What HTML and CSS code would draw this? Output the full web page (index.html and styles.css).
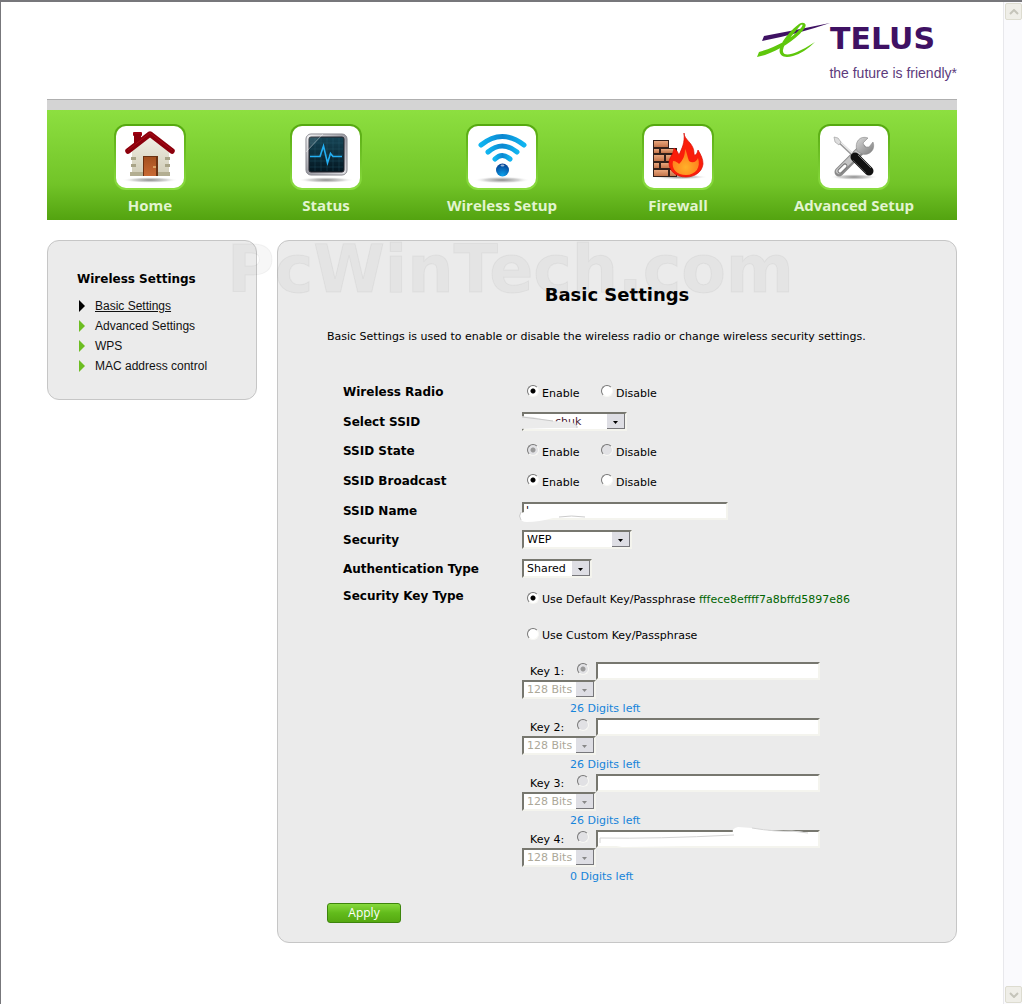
FILE: index.html
```html
<!DOCTYPE html>
<html lang="en">
<head>
  <meta charset="UTF-8" />
  <meta name="viewport" content="width=device-width, initial-scale=1.0"/>
  <title>TELUS - Basic Settings</title>
  <link rel="stylesheet" href="styles.css">
</head>
<body>

  <div class="page">
    <!-- Logo -->
    <header>
      <div class="logo">
        <svg class="swash" width="76" height="38" viewBox="0 0 76 38" aria-hidden="true">
          <path d="M6 19 L8 14 Q40 8 74 1 Q42 12 6 19Z" fill="#3f1163"/>
          <path d="M1 35 L3 30 C20 25 34 18 45 6 C48 2 46 1 43 5 C37 13 28 21 27 28 C26 34 34 33 41 30 Q50 26 59 20 Q48 31 37 34 C27 37 22 33 24 26 C26 18 36 7 43 2 C48 -1 52 2 48 7 C38 20 22 28 9 33Z" fill="#5fc70c"/>
        </svg>
        <span class="brand">TELUS</span>
      </div>
      <div class="tagline">the future is friendly*</div>
    </header>

    <!-- Main navigation -->
    <nav>
      <a href="#">
        <span class="icon">
          <svg viewBox="0 0 68 62" aria-hidden="true">
            <defs>
              <radialGradient id="shadow"><stop offset="0" stop-color="#888"/><stop offset=".6" stop-color="#ccc" stop-opacity=".8"/><stop offset="1" stop-color="#fff" stop-opacity="0"/></radialGradient>
              <linearGradient id="wall" x1="0" y1="0" x2="0" y2="1"><stop offset="0" stop-color="#f3f1e6"/><stop offset="1" stop-color="#cfcbb6"/></linearGradient>
              <linearGradient id="door" x1="0" y1="0" x2="0" y2="1"><stop offset="0" stop-color="#a4501f"/><stop offset="1" stop-color="#c96a35"/></linearGradient>
            </defs>
            <ellipse cx="34" cy="54" rx="28" ry="3" fill="url(#shadow)"/>
            <rect x="17" y="6" width="9" height="4" rx="1" fill="#a00010"/>
            <rect x="18" y="8" width="7" height="12" fill="#8c000c"/>
            <path d="M16 25 L34 9 L53 25 V50 H16Z" fill="url(#wall)"/>
            <path d="M15 31h5v3h-5z M15 38h5v3h-5z M49 31h5v3h-5z M49 38h5v3h-5z" fill="#a9a488"/>
            <path d="M14 46h13v4H14z M41 46h13v4H41z" fill="#b3ae92"/>
            <rect x="27" y="30" width="15" height="20" fill="#6b3212"/>
            <rect x="28" y="31" width="12" height="19" fill="url(#door)"/>
            <path d="M37 41h3" stroke="#ffe29a"/>
            <path d="M12 25 L34 8 L56 25" fill="none" stroke="#8c000c" stroke-width="5.500" stroke-linecap="round" stroke-linejoin="round"/>
            <path d="M12 24 L34 7 L56 24" fill="none" stroke="#a80d18" stroke-width="1"/>
          </svg>
        </span>
        Home
      </a>
      <a href="#">
        <span class="icon">
          <svg viewBox="0 0 68 62" aria-hidden="true">
            <defs>
              <linearGradient id="frame" x1="0" y1="0" x2="1" y2="1"><stop offset="0" stop-color="#f4f4f6"/><stop offset=".5" stop-color="#9b9ba3"/><stop offset="1" stop-color="#e6e6ea"/></linearGradient>
              <linearGradient id="screen" x1="0" y1="0" x2="0" y2="1"><stop offset="0" stop-color="#164455"/><stop offset="1" stop-color="#031620"/></linearGradient>
            </defs>
            <ellipse cx="34" cy="54" rx="28" ry="3" fill="url(#shadow)"/>
            <rect x="14" y="8" width="41" height="41" rx="5" fill="url(#frame)" stroke="#85858c"/>
            <rect x="17" y="11" width="35" height="35" rx="2" fill="url(#screen)" stroke="#24242c"/>
            <path d="M23 12v33M29 12v33M35 12v33M41 12v33M47 12v33M18 17h33M18 23h33M18 29h33M18 35h33M18 41h33" stroke="#2c6478" stroke-width=".5" opacity=".6"/>
            <path d="M14 26 L31 8 H17 Q14 8 14 12Z" fill="#fff" opacity=".12"/>
            <path d="M14 26 L31 8" stroke="#fff" stroke-width=".8" opacity=".5"/>
            <path d="M18 30.500 H28 L31.500 20 L35.500 37 L38.500 27.500 L41 30.500 H50" fill="none" stroke="#23aef2" stroke-width="1.600"/>
          </svg>
        </span>
        Status
      </a>
      <a href="#">
        <span class="icon">
          <svg viewBox="0 0 68 62" aria-hidden="true">
            <defs>
              <linearGradient id="wave" x1="0" y1="0" x2="1" y2="0"><stop offset="0" stop-color="#10b4f0"/><stop offset=".5" stop-color="#0a86d0"/><stop offset="1" stop-color="#10b4f0"/></linearGradient>
              <radialGradient id="ball" cx=".5" cy=".9" r=".9"><stop offset="0" stop-color="#0aa0ea"/><stop offset="1" stop-color="#033c90"/></radialGradient>
            </defs>
            <ellipse cx="34" cy="54" rx="28" ry="3.500" fill="url(#shadow)"/>
            <g fill="none" stroke="url(#wave)" stroke-width="5" stroke-linecap="round">
              <path d="M13 19 Q34 2 56 19"/>
              <path d="M20 26 Q34 14 49 26"/>
              <path d="M27 33 Q34 26 42 33"/>
            </g>
            <circle cx="34.500" cy="44" r="6.500" fill="url(#ball)"/>
            <ellipse cx="34.500" cy="39.500" rx="2" ry="1" fill="#fff" opacity=".6"/>
          </svg>
        </span>
        Wireless Setup
      </a>
      <a href="#">
        <span class="icon">
          <svg viewBox="0 0 68 62" aria-hidden="true">
            <defs>
              <linearGradient id="brick" x1="0" y1="0" x2="0" y2="1"><stop offset="0" stop-color="#e9a67c"/><stop offset="1" stop-color="#c4744a"/></linearGradient>
              <radialGradient id="flame" cx=".5" cy=".7" r=".6"><stop offset="0" stop-color="#ffb129"/><stop offset="1" stop-color="#ff7a1c"/></radialGradient>
            </defs>
            <ellipse cx="36" cy="51" rx="28" ry="2.500" fill="url(#shadow)"/>
            <path d="M9 14h16v8h8v29H9z" fill="#33201a"/>
            <g fill="url(#brick)">
              <rect x="10" y="15" width="14" height="6"/>
              <rect x="10" y="23" width="5" height="4"/><rect x="17" y="23" width="14" height="4"/>
              <rect x="10" y="29" width="10" height="6"/><rect x="22" y="29" width="10" height="6"/>
              <rect x="10" y="37" width="5" height="5"/><rect x="17" y="37" width="14" height="5"/>
              <rect x="10" y="44" width="14" height="6"/><rect x="26" y="44" width="6" height="6"/>
            </g>
            <path d="M40 7 C40 14 50 17 50 27 C50 31 53 29 54 24 C57 29 59 33 59 38 C58 46 51 51 42 51 C32 51 25 45 25 37 C25 31 29 30 30 22 C33 24 34 27 35 29 C38 22 41 17 40 7Z" fill="#fa1e0a" stroke="#d90f06" stroke-width=".7"/>
            <path d="M41 23 C43 26 43 30 45 35 C49 38 53 35 54 32 C57 41 52 49 42 49 C33 49 27 43 29 35 C32 35 34 37 35 38 C39 34 41 30 41 23Z" fill="url(#flame)"/>
          </svg>
        </span>
        Firewall
      </a>
      <a href="#">
        <span class="icon">
          <svg viewBox="0 0 68 62" aria-hidden="true">
            <defs>
              <linearGradient id="steel" x1="0" y1="0" x2="1" y2="1"><stop offset="0" stop-color="#dcdcdc"/><stop offset="1" stop-color="#7c7c7c"/></linearGradient>
            </defs>
            <ellipse cx="34" cy="51" rx="24" ry="3" fill="url(#shadow)"/>
            <path d="M19 46 L42 23" stroke="#8a8a8a" stroke-width="9" stroke-linecap="round"/>
            <path d="M19 45 L42 22" stroke="#c4c4c4" stroke-width="6" stroke-linecap="round"/>
            <path d="M20 45 L25 40" stroke="#777" stroke-width="5" stroke-linecap="round"/>
            <path d="M20 45 L25 40" stroke="#fff" stroke-width="3" stroke-linecap="round"/>
            <path d="M48 12 L43 17 L45 21 L49 21 L53 16 C56 24 49 30 42 28 L37 25 C34 16 40 9 48 12Z" fill="url(#steel)" stroke="#8a8a8a" stroke-width=".6"/>
            <path d="M17 14 L34 30" stroke="#999" stroke-width="3"/>
            <path d="M17 13 L34 29" stroke="#eee" stroke-width="1.400"/>
            <path d="M14 11 L18 12 L21 16 L19 19 L15 16Z" fill="#ddd" stroke="#999" stroke-width=".6"/>
            <path d="M35 31 L49 45" stroke="#111" stroke-width="9" stroke-linecap="round"/>
            <path d="M38 29 L51 42" stroke="#777" stroke-width="1"/>
            <path d="M33 34 L46 47" stroke="#555" stroke-width=".7"/>
          </svg>
        </span>
        Advanced Setup
      </a>
    </nav>

    <main>
      <!-- Sidebar -->
      <aside class="panel sidebar">
        <h3>Wireless Settings</h3>
        <ul>
          <li class="active"><a href="#">Basic Settings</a></li>
          <li><a href="#">Advanced Settings</a></li>
          <li><a href="#">WPS</a></li>
          <li><a href="#">MAC address control</a></li>
        </ul>
      </aside>

      <!-- Settings form -->
      <form class="panel content">
        <h1>Basic Settings</h1>
        <p class="intro">Basic Settings is used to enable or disable the wireless radio or change wireless security settings.</p>

        <div class="fields">
          <div class="row radios">
            <span class="name">Wireless Radio</span>
            <label><input type="radio" name="radio" checked>Enable</label>
            <label><input type="radio" name="radio">Disable</label>
          </div>
          <div class="row">
            <label class="name" for="ssid">Select SSID</label>
            <div class="control">
              <select id="ssid" class="ssid-select"><option>chuk</option></select>
              <svg class="smudge" width="64" height="20" viewBox="0 0 64 20" aria-hidden="true">
                <path d="M0 4 L14 5 Q34 10 50 10 L57 12 L58 16 L30 16 L0 17Z" fill="#ebebeb"/>
                <path d="M3 5 Q20 7 34 9 M54 11 L58 14 V16" fill="none" stroke="#c8c8c8"/>
              </svg>
            </div>
          </div>
          <div class="row radios">
            <span class="name">SSID State</span>
            <label><input type="radio" name="state" checked disabled>Enable</label>
            <label><input type="radio" name="state" disabled>Disable</label>
          </div>
          <div class="row radios">
            <span class="name">SSID Broadcast</span>
            <label><input type="radio" name="broadcast" checked>Enable</label>
            <label><input type="radio" name="broadcast">Disable</label>
          </div>
          <div class="row">
            <label class="name" for="ssid-name">SSID Name</label>
            <div class="control">
              <input type="text" id="ssid-name" class="ssid-name" value="'">
              <svg class="smudge" width="80" height="22" viewBox="0 0 80 22" aria-hidden="true">
                <path d="M2 11 Q20 4 50 4 L78 5 V13 L34 16 Q20 20 8 20 Q-1 20 2 11Z" fill="#fff"/>
                <path d="M2 10 Q-1 14 2 18 M40 15 Q52 13 66 15" fill="none" stroke="#ccc"/>
              </svg>
            </div>
          </div>
          <div class="row">
            <label class="name" for="security">Security</label>
            <select id="security" class="security-select"><option>WEP</option></select>
          </div>
          <div class="row">
            <label class="name" for="auth">Authentication Type</label>
            <select id="auth"><option>Shared</option></select>
          </div>
          <div class="row key-row">
            <span class="name">Security Key Type</span>
            <div class="keys">
              <label class="key-type"><input type="radio" name="keytype" checked>Use Default Key/Passphrase&nbsp;<span class="default-key">fffece8effff7a8bffd5897e86</span></label>
              <label class="key-type"><input type="radio" name="keytype">Use Custom Key/Passphrase</label>

              <div class="key">
                <div class="key-line">
                  <label for="key1">Key 1:</label>
                  <input type="radio" name="key" aria-label="Use key 1" checked disabled>
                  <input type="text" id="key1">
                </div>
                <select aria-label="Key 1 length" disabled><option>128 Bits</option></select>
                <div class="digits">26 Digits left</div>
              </div>
              <div class="key">
                <div class="key-line">
                  <label for="key2">Key 2:</label>
                  <input type="radio" name="key" aria-label="Use key 2" disabled>
                  <input type="text" id="key2">
                </div>
                <select aria-label="Key 2 length" disabled><option>128 Bits</option></select>
                <div class="digits">26 Digits left</div>
              </div>
              <div class="key">
                <div class="key-line">
                  <label for="key3">Key 3:</label>
                  <input type="radio" name="key" aria-label="Use key 3" disabled>
                  <input type="text" id="key3">
                </div>
                <select aria-label="Key 3 length" disabled><option>128 Bits</option></select>
                <div class="digits">26 Digits left</div>
              </div>
              <div class="key">
                <div class="key-line">
                  <label for="key4">Key 4:</label>
                  <input type="radio" name="key" aria-label="Use key 4" disabled>
                  <input type="text" id="key4">
                  <svg class="smudge key-smudge" width="224" height="24" viewBox="0 0 224 24" aria-hidden="true">
                    <path d="M138 8 Q134 3 142 1 L156 2 Q180 6 200 5 L215 7 V18 L90 20 L26 21 L4 17 V12 L138 10Z" fill="#fff"/>
                    <path d="M4 17 V12 Q60 13 138 9 M156 2 Q180 6 196 5 L212 7" fill="none" stroke="#d4d4d4"/>
                  </svg>
                </div>
                <select aria-label="Key 4 length" disabled><option>128 Bits</option></select>
                <div class="digits">0 Digits left</div>
              </div>
            </div>
          </div>
        </div>

        <button type="submit" class="apply">Apply</button>
      </form>

      <div class="watermark">PcWinTech.com</div>
    </main>
  </div>

  <!-- Window scrollbar -->
  <div class="scrollbar">
    <button type="button" aria-label="Scroll up"><svg width="10" height="6" viewBox="0 0 10 6"><path d="M1 5 L5 1 L9 5" fill="none" stroke="#c5c4ba" stroke-width="2"/></svg></button>
    <button type="button" aria-label="Scroll down"><svg width="10" height="6" viewBox="0 0 10 6"><path d="M1 1 L5 5 L9 1" fill="none" stroke="#c5c4ba" stroke-width="2"/></svg></button>
  </div>

</body>
</html>
```

FILE: styles.css
```css
* {
  box-sizing: border-box;
}

body {
  margin: 0;
  min-height: 100vh;
  display: flex;
  border-top: 2px solid #77777b;
  border-left: 1px solid #77777b;
  background: #fff;
  color: #000;
  font-family: Verdana, "DejaVu Sans", sans-serif;
  font-size: 11px;
}

.page {
  flex: 1;
  max-width: 1002px;
  margin: 0 auto;
  padding: 0 46px;
}

/* Logo */
header {
  height: 97px;
  padding-top: 20px;
  display: flex;
  flex-direction: column;
  align-items: flex-end;
}

.logo {
  display: flex;
  padding-right: 22px;
}

.swash {
  margin-right: -2px;
}

.brand {
  color: #3f1163;
  font-size: 30px;
  font-weight: bold;
  line-height: 34px;
}

.tagline {
  margin-top: 3px;
  color: #5d3a7c;
  font-family: "Liberation Sans", Arial, sans-serif;
  font-size: 14px;
  line-height: 20px;
}

/* Navigation */
nav {
  display: grid;
  grid-template-columns: repeat(5, 1fr);
  height: 121px;
  padding: 14px 15px 0;
  border-top: 1px solid #afafaf;
  background: linear-gradient(#d4d4d4 10px, #8ddf40 10px, #72c428 84px, #53a310);
}

nav a {
  display: flex;
  flex-direction: column;
  align-items: center;
  padding-top: 10px;
  color: #e2f4d0;
  font-family: "Open Sans", "Noto Sans", sans-serif;
  font-size: 15px;
  font-weight: bold;
  line-height: 30px;
  text-decoration: none;
}

.icon {
  display: block;
  width: 72px;
  height: 66px;
  padding: 2px;
  border-radius: 12px;
  background: linear-gradient(#55a80f, #8bdd40);
}

.icon svg {
  display: block;
  width: 68px;
  height: 62px;
  border-radius: 10px;
  background: #fff;
}

/* Panels */
main {
  position: relative;
  display: flex;
  align-items: flex-start;
  gap: 20px;
  padding: 20px 0;
}

.panel {
  border: 1px solid #c6c6c6;
  border-radius: 12px;
  background: #ebebeb;
}

.sidebar {
  width: 210px;
  padding: 28px 29px 23px;
}

.sidebar h3 {
  margin: 0 0 7px;
  font-size: 12px;
  line-height: 20px;
  white-space: nowrap;
}

.sidebar ul {
  margin: 0;
  padding: 0;
  list-style: none;
}

.sidebar li {
  display: flex;
  align-items: center;
  height: 20px;
  padding-left: 2px;
  font-family: "Liberation Sans", Arial, sans-serif;
  font-size: 12px;
}

.sidebar li::before {
  content: "";
  margin-right: 10px;
  border: 6px solid transparent;
  border-left-color: #6cbd22;
  border-right: 0;
}

.sidebar li.active::before {
  border-left-color: #000;
}

.sidebar a {
  color: #111;
  text-decoration: none;
}

.sidebar .active a {
  text-decoration: underline;
}

.content {
  flex: 1;
  padding: 42px 49px 19px;
}

h1 {
  margin: 0;
  font-size: 18px;
  line-height: 24px;
  text-align: center;
}

.intro {
  margin: 20px 0 30px;
  line-height: 20px;
}

/* Form rows */
.fields {
  padding-left: 16px;
}

.row {
  display: flex;
  align-items: center;
  min-height: 29px;
}

.radios {
  min-height: 30px;
}

.name {
  width: 179px;
  font-size: 12px;
  font-weight: bold;
}

.radios .name {
  width: 184px;
}

.radios label {
  display: flex;
  align-items: center;
  width: 74px;
  padding-top: 2px;
}

input[type="radio"] {
  appearance: none;
  width: 12px;
  height: 12px;
  margin: 0 3px 4px 0;
  border: 1px solid;
  border-color: #777 #f8f8f4 #f8f8f4 #777;
  border-radius: 50%;
  background: #fff;
}

input[type="radio"]:checked {
  background: radial-gradient(circle, #000 2px, #fff 3px);
}

input[type="radio"]:disabled {
  background: #e1e1e4;
}

input[type="radio"]:checked:disabled {
  background: radial-gradient(circle, #999 2px, #e1e1e4 3px);
}

input[type="text"],
select {
  height: 18px;
  margin: 0;
  border: 2px solid;
  border-color: #77776f #f4f4ee #f4f4ee #77776f;
  border-radius: 0;
  background-color: #fff;
  color: #000;
  font: inherit;
}

input[type="text"] {
  padding: 0 2px;
}

select {
  appearance: none;
  height: 19px;
  width: 70px;
  padding: 0 18px 0 3px;
  background: #fff url("data:image/svg+xml,%3Csvg xmlns='http://www.w3.org/2000/svg' width='18' height='15'%3E%3Cpath d='M0 0h18v15H0z' fill='%23dedee4'/%3E%3Cpath d='M0 14.500h18M17.500 0v15' stroke='%2377777b'/%3E%3Cpath d='M6 7h5L8.500 10z'/%3E%3C/svg%3E") no-repeat right center;
}

select:disabled {
  width: 74px;
  color: #aca899;
  opacity: 1;
  background-image: url("data:image/svg+xml,%3Csvg xmlns='http://www.w3.org/2000/svg' width='18' height='15'%3E%3Cpath d='M0 0h18v15H0z' fill='%23dedee4'/%3E%3Cpath d='M0 14.500h18M17.500 0v15' stroke='%2377777b'/%3E%3Cpath d='M6 7h5L8.500 10z' fill='%23888'/%3E%3C/svg%3E");
}

.ssid-select {
  width: 105px;
  padding-left: 31px;
  color: #4a2030;
}

.security-select {
  width: 110px;
}

.ssid-name {
  width: 206px;
}

.control {
  position: relative;
  display: flex;
}

/* Blanked out values */
.smudge {
  position: absolute;
  top: 0;
  left: -3px;
}

/* Security keys */
.key-row {
  align-items: flex-start;
}

.key-row .name {
  padding-top: 6px;
}

.key-type {
  display: flex;
  align-items: center;
  height: 36px;
  padding: 0 0 4px 5px;
  white-space: nowrap;
}

.key-type input[type="radio"] {
  margin-bottom: 3px;
}

.default-key {
  color: #006400;
}

.keys {
  padding-bottom: 16px;
}

.key {
  height: 56px;
}

.key:first-of-type {
  margin-top: 7px;
}

.key-line {
  position: relative;
  display: flex;
  align-items: center;
  height: 18px;
  padding-left: 8px;
}

.key-line label {
  width: 47px;
}

.key-line input[type="text"] {
  width: 224px;
  margin-left: 4px;
}

.key-smudge {
  top: -4px;
  left: 74px;
}

.key select {
  display: block;
}

.digits {
  padding-left: 48px;
  color: #1684da;
  line-height: 19px;
}

.apply {
  display: block;
  width: 74px;
  height: 20px;
  margin-top: 1px;
  padding: 0;
  border: 1px solid #3d850c;
  border-radius: 3px;
  background: linear-gradient(#86d93c, #62bb1b 50%, #55a811);
  color: #fff;
  font-family: "Open Sans", "Noto Sans", sans-serif;
  font-size: 12px;
  font-weight: 500;
  line-height: 16px;
}

.watermark {
  position: absolute;
  top: 12px;
  left: 180px;
  color: rgba(120, 120, 120, 0.06);
  font-size: 65px;
  font-weight: bold;
  line-height: 76px;
  pointer-events: none;
  -webkit-text-stroke: 1px rgba(120, 120, 120, 0.07);
}

/* Scrollbar */
.scrollbar {
  display: flex;
  flex-direction: column;
  justify-content: space-between;
  width: 19px;
  padding: 1px;
  border-left: 1px solid #e8e8ec;
  background: #fafafd;
}

.scrollbar button {
  display: flex;
  align-items: center;
  justify-content: center;
  width: 17px;
  height: 17px;
  padding: 0;
  border: 1px solid #dddcd0;
  border-radius: 2px;
  background: #efeee8;
}
```
